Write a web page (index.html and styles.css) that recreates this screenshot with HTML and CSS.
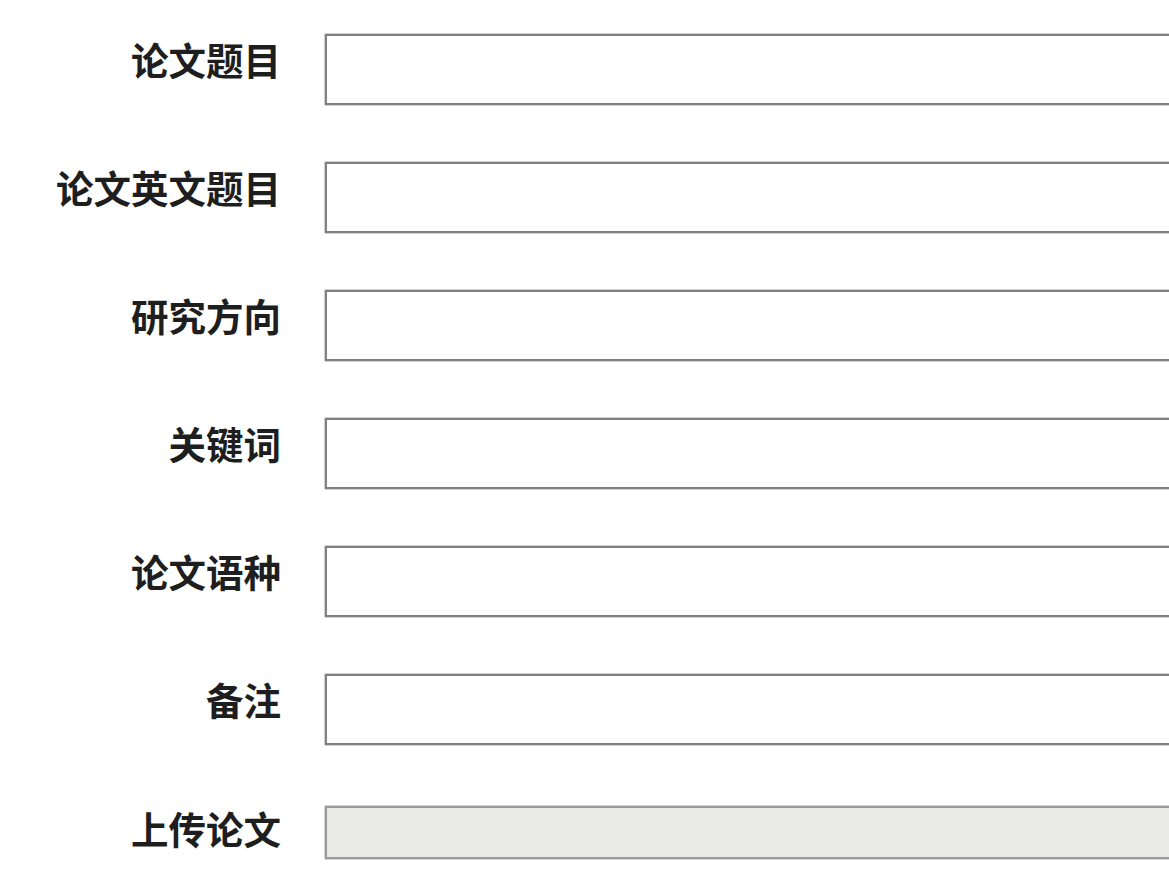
FILE: index.html
```html
<!DOCTYPE html>
<html lang="zh-CN">
<head>
    <meta charset="UTF-8">
    <title>论文信息</title>
    <link rel="stylesheet" href="styles.css">
</head>
<body>
    <form class="thesis-form">
        <div class="form-row">
            <label class="form-label" for="title">论文题目</label>
            <input type="text" id="title" class="form-input">
        </div>
        <div class="form-row">
            <label class="form-label" for="title-en">论文英文题目</label>
            <input type="text" id="title-en" class="form-input">
        </div>
        <div class="form-row">
            <label class="form-label" for="direction">研究方向</label>
            <input type="text" id="direction" class="form-input">
        </div>
        <div class="form-row">
            <label class="form-label" for="keywords">关键词</label>
            <input type="text" id="keywords" class="form-input">
        </div>
        <div class="form-row">
            <label class="form-label" for="language">论文语种</label>
            <input type="text" id="language" class="form-input">
        </div>
        <div class="form-row">
            <label class="form-label" for="remark">备注</label>
            <input type="text" id="remark" class="form-input">
        </div>
        <div class="form-row form-row-upload">
            <label class="form-label" for="upload">上传论文</label>
            <div id="upload" class="upload-box"></div>
        </div>
    </form>
</body>
</html>
```

FILE: styles.css
```css
html, body {
    margin: 0;
    background-color: #fff;
    overflow: hidden;
}
.thesis-form {
    padding-top: 34px;
    font-family: "Noto Sans CJK SC", "Microsoft YaHei", sans-serif;
}
.form-row {
    display: flex;
    align-items: flex-start;
    gap: 44px;
    margin-bottom: 57px;
}
.form-label {
    flex: 0 0 281px;
    text-align: right;
    font-size: 37.5px;
    font-weight: bold;
    line-height: 50px;
    color: #1e1e1e;
    margin-top: 0;
}
.form-input {
    flex: 1 1 auto;
    min-width: 0;
    height: 71px;
    box-sizing: border-box;
    border: 2px solid #808080;
    border-right: 0;
    box-shadow: -1px 0 0 #cfcfcf, 0 -1px 0 #cfcfcf, 0 1px 0 #cfcfcf;
    background-color: #fff;
    margin: 0;
    padding: 0 10px;
    outline: none;
}
.form-row-upload {
    padding-top: 4px;
}
.form-row-upload .form-label {
    margin-top: -3px;
}
.upload-box {
    flex: 1 1 auto;
    height: 53px;
    box-sizing: border-box;
    border: 2px solid #9a9a9a;
    border-right: 0;
    box-shadow: -1px 0 0 #d4d4d4, 0 -1px 0 #d4d4d4, 0 1px 0 #d4d4d4;
    background-color: #e9e9e6;
}
```
